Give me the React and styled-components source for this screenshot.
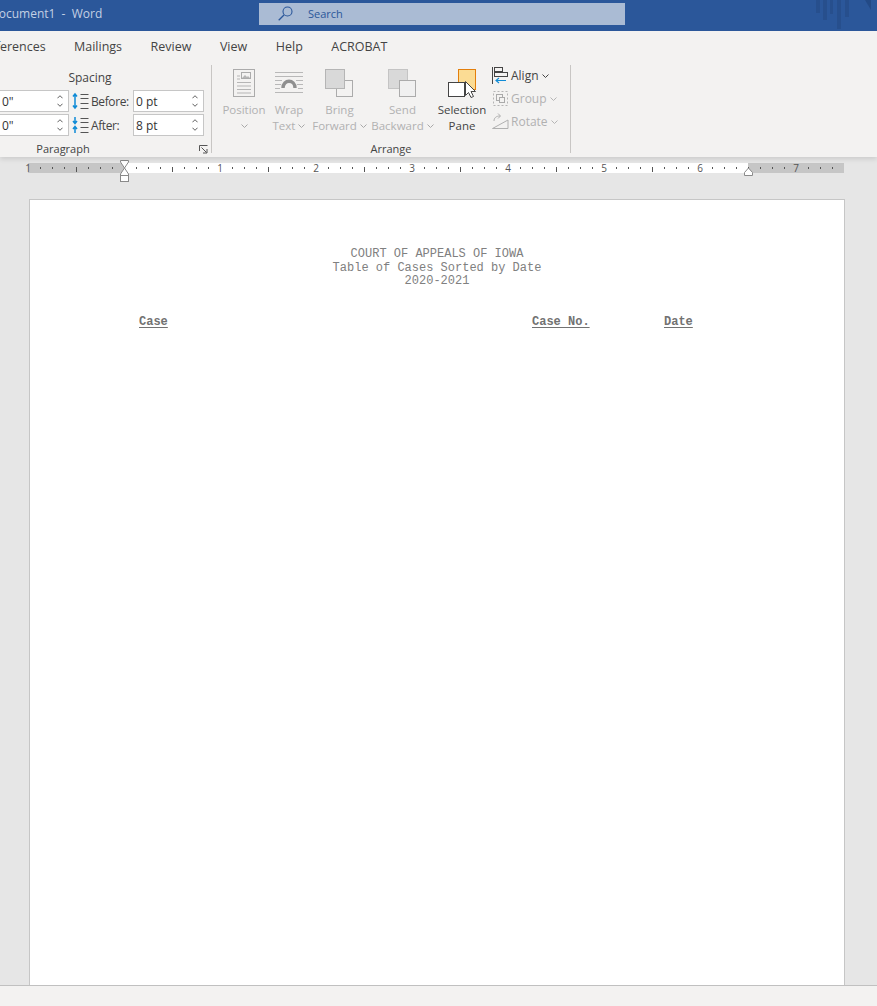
import React from "react";
import styled, { createGlobalStyle } from "styled-components";

const tabs = ["Mailings", "Review", "View", "Help", "ACROBAT"];

const Chevron = ({ up, color = "#666", w = 7, h = 4 }) => (
  <ChevronSvg width={w} height={h} viewBox="0 0 7 4">
    <polyline points={up ? "0.5,3.5 3.5,0.5 6.5,3.5" : "0.5,0.5 3.5,3.5 6.5,0.5"} fill="none" stroke={color} strokeWidth="1" />
  </ChevronSvg>
);

const SpinInput = ({ value, left }) => (
  <Spin $left={left}>
    <SpinValue>{value}</SpinValue>
    <SpinArrows>
      <Chevron up color="#444" w={6} />
      <Chevron color="#444" w={6} />
    </SpinArrows>
  </Spin>
);

const BeforeIcon = () => (
  <svg width="17" height="18" viewBox="0 0 17 18">
    <path d="M3 2v14M1 4.500 3 2l2 2.500M1 13.500 3 16l2-2.500" fill="none" stroke="#0f8bd6" strokeWidth="1.500" />
    <path d="M8.500 2.500h8M8.500 6.500h8M8.500 11.500h8M8.500 16.500h8" stroke="#555" strokeWidth="1" />
  </svg>
);

const AfterIcon = () => (
  <svg width="17" height="18" viewBox="0 0 17 18">
    <path d="M3 1v6M1 5 3 7.500 5 5M3 11v6M1 13 3 10.500 5 13" fill="none" stroke="#0f8bd6" strokeWidth="1.500" />
    <path d="M8.500 2.500h8M8.500 6.500h8M8.500 11.500h8M8.500 16.500h8" stroke="#555" strokeWidth="1" />
  </svg>
);

const PositionIcon = () => (
  <svg width="23" height="29" viewBox="0 0 23 29">
    <rect x="0.500" y="0.500" width="21" height="27" fill="#f3f2f1" stroke="#ababab" />
    <rect x="8.500" y="3.500" width="9" height="6" fill="#f3f2f1" stroke="#ababab" />
    <path d="M9 9l3-3 2 2 1-1 2 2z" fill="#b5b5b5" />
    <path d="M4 7h3M4 10h3M4 13.500h14M4 17h14M4 20.500h14M4 24h14" stroke="#b5b5b5" />
  </svg>
);

const WrapIcon = () => (
  <svg width="28" height="29" viewBox="0 0 28 29">
    <path d="M0 3.500h28M0 7.500h28M0 11.500h7M21 11.500h7M0 15.500h6M22 15.500h6M0 19.500h5M23 19.500h5M0 23.500h28" stroke="#b8b8b8" />
    <path d="M8 19c0-9 12-9 12 0" fill="none" stroke="#8f8f8f" strokeWidth="3.400" />
  </svg>
);

const BringIcon = () => (
  <svg width="29" height="29" viewBox="0 0 29 29">
    <rect x="11.500" y="11.500" width="16" height="16" fill="#f3f2f1" stroke="#ababab" />
    <rect x="0.500" y="0.500" width="19" height="19" fill="#d9d9d9" stroke="#b5b5b5" />
  </svg>
);

const SendIcon = () => (
  <svg width="29" height="29" viewBox="0 0 29 29">
    <rect x="0.500" y="0.500" width="19" height="19" fill="#d9d9d9" stroke="#c4c4c4" />
    <rect x="11.500" y="11.500" width="16" height="16" fill="#f0f0f0" stroke="#ababab" />
  </svg>
);

const SelectionIcon = () => (
  <svg width="32" height="30" viewBox="-2 0 32 30">
    <rect x="10.500" y="0.500" width="17" height="20" fill="#fbdc94" stroke="#e37f0c" />
    <rect x="0.500" y="13.500" width="16" height="14" fill="#fff" stroke="#444" />
    <path d="M17.500 12.500v14l3-3 2.500 5 2.500-1-2.500-5h4.500z" fill="#fff" stroke="#444" />
  </svg>
);

const AlignIcon = () => (
  <svg width="17" height="17" viewBox="0 0 17 17">
    <path d="M0.500 0v17" stroke="#444" />
    <rect x="2.500" y="0.500" width="8" height="4" fill="#f3f2f1" stroke="#444" />
    <rect x="2.500" y="5.500" width="13" height="4" fill="#f3f2f1" stroke="#444" />
    <path d="M14 13.500H4M7 11l-3 2.500L7 16" fill="none" stroke="#0f8bd6" strokeWidth="1.100" />
  </svg>
);

const GroupIcon = () => (
  <svg width="17" height="17" viewBox="0 0 17 17">
    <rect x="1.500" y="1.500" width="14" height="14" fill="none" stroke="#b5b5b5" strokeDasharray="2 2" />
    <rect x="4.500" y="4.500" width="6" height="6" fill="#f3f2f1" stroke="#aaa" />
    <rect x="7.500" y="7.500" width="5" height="5" fill="#f3f2f1" stroke="#aaa" />
  </svg>
);

const RotateIcon = () => (
  <svg width="17" height="17" viewBox="0 0 17 17">
    <path d="M0.500 15.500 16 7v8.500z" fill="none" stroke="#b0b0b0" />
    <path d="M2 8c0-3 2-5 6-5M6 0.500 8.500 3 6 5.500" fill="none" stroke="#b0b0b0" />
  </svg>
);

const Launcher = () => (
  <svg width="9" height="9" viewBox="0 0 9 9">
    <path d="M0.500 6V0.500H8.500M2.500 2.500l5 5M4 8h4V4" fill="none" stroke="#555" />
  </svg>
);

const SearchIcon = () => (
  <svg width="15" height="15" viewBox="0 0 15 15">
    <circle cx="9.500" cy="5.500" r="4.500" fill="none" stroke="#2b579a" strokeWidth="1.100" />
    <path d="M6 9 .7 14.300" stroke="#2b579a" strokeWidth="1.300" />
  </svg>
);

const Decoration = () => (
  <DecorationSvg width="61" height="30" viewBox="0 0 61 30">
    <path d="M0 0h4v13H0zM7 0h4v20H7zM14 0h3v14h-3zM21 0h4v29h-4zM29 0h4v17h-4z" fill="#274f8d" />
    <path d="M49 0h6v10z" fill="#234a86" />
  </DecorationSvg>
);

// the ruler is a drawing: ticks every 1/8 inch, 96px to the inch, zero at x=124
const Ruler = () => {
  const marks = [];
  for (let x = 28; x < 844; x += 12) {
    const k = (x - 124) / 12;
    if (k % 8 === 0) {
      const n = Math.abs(k / 8);
      if (n > 0) {
        marks.push(
          <RulerNumber key={x} x={x} y="13">
            {n}
          </RulerNumber>
        );
      }
    } else if (k % 4 === 0) {
      marks.push(<rect key={x} x={x} y="8" width="1" height="5" fill="#555" />);
    } else {
      marks.push(<rect key={x} x={x} y="8" width="1" height="2" fill="#555" />);
    }
  }
  return (
    <RulerSvg width="877" height="24" viewBox="0 0 877 24">
      <rect x="28" y="4" width="96" height="10" fill="#c6c6c6" />
      <rect x="124" y="4" width="624" height="10" fill="#fff" />
      <rect x="748" y="4" width="96" height="10" fill="#c6c6c6" />
      {marks}
      <path d="M120.500 1.500h8V3l-4 6-4-6zM120.500 16.500V15l4-6 4 6v1.500z" fill="#fff" stroke="#8a8a8a" />
      <rect x="120.500" y="16.500" width="8" height="6" fill="#fff" stroke="#8a8a8a" />
      <path d="M744.500 16.500v-3l4-4.500 4 4.500v3z" fill="#fff" stroke="#8a8a8a" />
    </RulerSvg>
  );
};

const BigButton = ({ icon, lines, chevronLine, width, disabled }) => (
  <Big $width={width} $disabled={disabled}>
    <BigIcon>{icon}</BigIcon>
    {lines.map((l, i) => (
      <BigLine key={l}>
        {l}
        {chevronLine === i && <Chevron color={disabled ? "#a8a8a8" : "#555"} />}
      </BigLine>
    ))}
  </Big>
);

const SmallButton = ({ icon, label, disabled }) => (
  <Small $disabled={disabled}>
    {icon}
    <span>{label}</span>
    <Chevron color={disabled ? "#b5b5b5" : "#444"} />
  </Small>
);

export default function App() {
  return (
    <>
      <GlobalStyle />
      <Word>
        <TitleBar>
          <TitleText>Document1 &nbsp;-&nbsp; Word</TitleText>
          <SearchBox>
            <SearchIcon />
            <span>Search</span>
          </SearchBox>
          <Decoration />
        </TitleBar>

        <TabRow>
          <CutTab>References</CutTab>
          {tabs.map((t) => (
            <Tab key={t}>{t}</Tab>
          ))}
        </TabRow>

        <Ribbon>
          <ParagraphGroup>
            <SpacingTitle>Spacing</SpacingTitle>
            <SpinRow>
              <SpinInput left value={'0"'} />
              <BeforeIcon />
              <SpinLabel>Before:</SpinLabel>
              <SpinInput value="0 pt" />
            </SpinRow>
            <SpinRow>
              <SpinInput left value={'0"'} />
              <AfterIcon />
              <SpinLabel>After:</SpinLabel>
              <SpinInput value="8 pt" />
            </SpinRow>
            <ParagraphFoot>
              <span>Paragraph</span>
              <Launcher />
            </ParagraphFoot>
          </ParagraphGroup>

          <ArrangeGroup>
            <ArrangeBody>
              <BigButton disabled width={46} icon={<PositionIcon />} lines={["Position", ""]} chevronLine={1} />
              <BigButton disabled width={44} icon={<WrapIcon />} lines={["Wrap", "Text "]} chevronLine={1} />
              <BigButton disabled width={57} icon={<BringIcon />} lines={["Bring", "Forward "]} chevronLine={1} />
              <BigButton disabled width={69} icon={<SendIcon />} lines={["Send", "Backward "]} chevronLine={1} />
              <BigButton width={50} icon={<SelectionIcon />} lines={["Selection", "Pane"]} />
              <SmallColumn>
                <SmallButton icon={<AlignIcon />} label="Align" />
                <SmallButton disabled icon={<GroupIcon />} label="Group" />
                <SmallButton disabled icon={<RotateIcon />} label="Rotate" />
              </SmallColumn>
            </ArrangeBody>
            <ArrangeFoot>Arrange</ArrangeFoot>
          </ArrangeGroup>
        </Ribbon>

        <Workspace>
          <Ruler />
          <Page>
            <Heading>
              <div>COURT OF APPEALS OF IOWA</div>
              <div>Table of Cases Sorted by Date</div>
              <div>2020-2021</div>
            </Heading>
            <TableHead>
              <span>Case</span>
              <span>Case No.</span>
              <span>Date</span>
            </TableHead>
          </Page>
        </Workspace>

        <StatusBar />
      </Word>
    </>
  );
}

const GlobalStyle = createGlobalStyle`
  html, body {
    margin: 0;
    padding: 0;
    height: 100%;
    overflow: hidden;
  }
  #root {
    height: 100%;
  }
`;

const Word = styled.div`
  width: 877px;
  height: 1006px;
  display: flex;
  flex-direction: column;
  overflow: hidden;
  background: #e6e6e6;
  font-family: "Open Sans", "Liberation Sans", sans-serif;
  font-size: 12px;
  color: #444;
`;

const ChevronSvg = styled.svg`
  display: block;
  flex: none;
`;

const TitleBar = styled.div`
  height: 31px;
  flex: none;
  background: #2b579a;
  display: flex;
  align-items: flex-start;
  position: relative;
`;

const TitleText = styled.div`
  width: 259px;
  margin-left: -10px;
  flex: none;
  line-height: 28px;
  color: #c3d0e4;
  white-space: nowrap;
`;

const SearchBox = styled.div`
  width: 366px;
  height: 22px;
  margin: 3px 0 0 10px;
  box-sizing: border-box;
  padding: 0 0 1px 19px;
  flex: none;
  background: #aabbd4;
  display: flex;
  align-items: center;
  gap: 15px;
  font-size: 11px;
  color: #2b579a;
`;

const DecorationSvg = styled.svg`
  position: absolute;
  left: 816px;
  top: 0;
`;

const TabRow = styled.div`
  height: 29px;
  flex: none;
  background: #f3f2f1;
  display: flex;
  align-items: center;
  gap: 28.500px;
  margin-left: -19px;
  padding-top: 2px;
  box-sizing: border-box;
  white-space: nowrap;
  font-size: 12.500px;
`;

const Tab = styled.div`
  color: #444;
`;

const CutTab = styled(Tab)`
  width: 64.500px;
`;

const Ribbon = styled.div`
  height: 97px;
  flex: none;
  background: #f3f2f1;
  display: flex;
  align-items: flex-start;
  box-shadow: 0 2px 5px rgba(0, 0, 0, 0.12);
  clip-path: inset(0 0 -12px 0);
  position: relative;
  z-index: 1;
`;

const ParagraphGroup = styled.div`
  width: 211px;
  height: 88px;
  margin-top: 5px;
  flex: none;
  border-right: 1px solid #c8c6c4;
  display: flex;
  flex-direction: column;
`;

const SpacingTitle = styled.div`
  width: 180px;
  margin-top: 5px;
  margin-bottom: 4px;
  line-height: 16px;
  text-align: center;
`;

const SpinRow = styled.div`
  height: 22px;
  margin-bottom: 2px;
  display: flex;
  align-items: center;
  font-size: 12px;
`;

const Spin = styled.div`
  width: ${(p) => (p.$left ? "81px" : "71px")};
  height: 22px;
  margin-left: ${(p) => (p.$left ? "-12px" : "0")};
  margin-right: ${(p) => (p.$left ? "3px" : "0")};
  padding-left: ${(p) => (p.$left ? "13px" : "2px")};
  padding-right: 5px;
  box-sizing: border-box;
  flex: none;
  border: 1px solid #c6c6c6;
  background: #fff;
  display: flex;
  align-items: center;
  justify-content: space-between;
`;

const SpinValue = styled.span`
  color: #333;
`;

const SpinArrows = styled.div`
  display: flex;
  flex-direction: column;
  gap: 4px;
`;

const SpinLabel = styled.span`
  width: 42px;
  margin-left: 2px;
  flex: none;
  letter-spacing: -0.4px;
`;

const ParagraphFoot = styled.div`
  height: 12px;
  margin-top: 3px;
  display: flex;
  align-items: flex-start;
  font-size: 11px;
  line-height: 16px;
  span {
    width: 126px;
    flex: none;
    text-align: center;
  }
  svg {
    margin: 4px 0 0 73px;
  }
`;

const ArrangeGroup = styled.div`
  width: 359px;
  height: 88px;
  margin-top: 5px;
  flex: none;
  box-sizing: border-box;
  border-right: 1px solid #c8c6c4;
  padding-left: 9px;
  display: flex;
  flex-direction: column;
`;

const ArrangeBody = styled.div`
  height: 76px;
  flex: none;
  display: flex;
  align-items: flex-start;
`;

const ArrangeFoot = styled.div`
  height: 12px;
  margin-left: -9px;
  font-size: 11px;
  line-height: 16px;
  text-align: center;
`;

const Big = styled.div`
  width: ${(p) => p.$width}px;
  flex: none;
  padding-top: 4px;
  display: flex;
  flex-direction: column;
  align-items: center;
  font-size: 11.500px;
  color: ${(p) => (p.$disabled ? "#b1b1b1" : "#444")};
  white-space: nowrap;
`;

const BigIcon = styled.div`
  height: 33px;
  display: flex;
  align-items: flex-start;
`;

const BigLine = styled.div`
  height: 16px;
  line-height: 16px;
  display: flex;
  align-items: center;
  justify-content: center;
  gap: 3px;
`;

const SmallColumn = styled.div`
  margin: -1px 0 0 5px;
  display: flex;
  flex-direction: column;
`;

const Small = styled.div`
  height: 23px;
  display: flex;
  align-items: center;
  gap: 2px;
  color: ${(p) => (p.$disabled ? "#b1b1b1" : "#444")};
  span {
    margin-right: 1px;
  }
`;

const Workspace = styled.div`
  flex: 1;
  min-height: 0;
  display: flex;
  flex-direction: column;
  overflow: hidden;
`;

const RulerSvg = styled.svg`
  display: block;
  flex: none;
  margin-top: 2px;
`;

const RulerNumber = styled.text`
  font-size: 10px;
  fill: #555;
  text-anchor: middle;
`;

const Page = styled.div`
  width: 816px;
  flex: 1;
  margin: 16px 0 0 29px;
  box-sizing: border-box;
  border: 1px solid #c6c6c6;
  border-bottom: none;
  background: #fff;
  padding-top: 48px;
  font-family: "Liberation Mono", "Courier New", monospace;
  font-size: 12px;
  color: #808080;
`;

const Heading = styled.div`
  line-height: 13.500px;
  text-align: center;
`;

const TableHead = styled.div`
  margin-top: 26px;
  padding-left: 109px;
  display: grid;
  grid-template-columns: 393px 132px auto;
  line-height: 14px;
  font-weight: bold;
  color: #727272;
  span {
    justify-self: start;
    text-decoration: underline;
    text-underline-offset: 2px;
  }
`;

const StatusBar = styled.div`
  height: 21px;
  flex: none;
  box-sizing: border-box;
  border-top: 1px solid #c0c0c0;
  background: #f3f2f1;
`;
